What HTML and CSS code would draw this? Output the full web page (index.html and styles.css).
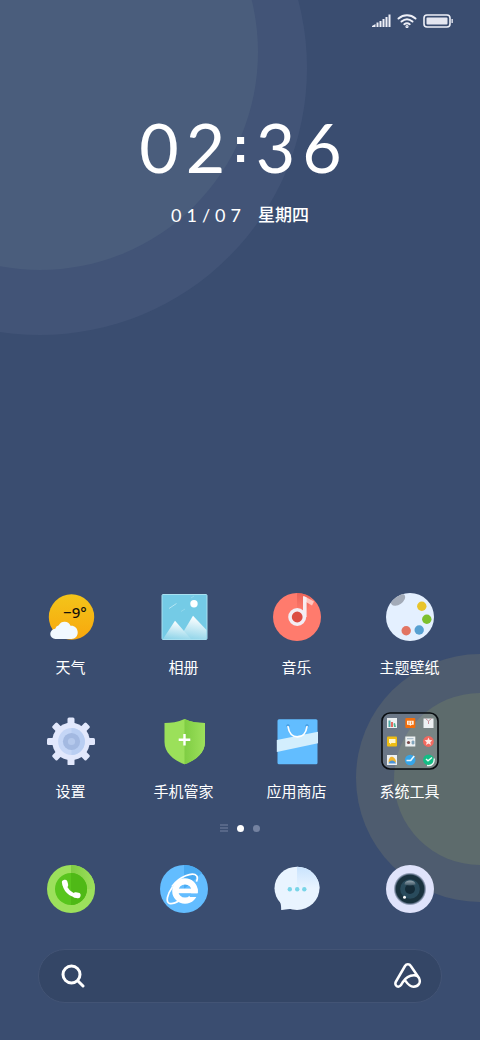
FILE: index.html
```html
<!DOCTYPE html>
<html lang="zh-CN">
<head>
  <meta charset="UTF-8" />
  <meta name="viewport" content="width=device-width, initial-scale=1.0"/>
  <title>桌面</title>
  <link rel="stylesheet" href="styles.css">
</head>
<body>

  <div class="home">
    <!-- Wallpaper -->
    <div class="wallpaper" aria-hidden="true">
      <span class="circle top-outer"></span>
      <span class="circle top-inner"></span>
      <span class="circle bottom-outer"></span>
      <span class="circle bottom-inner"></span>
    </div>

    <header class="status-bar">
      <svg width="19" height="14" viewBox="0 0 19 14" fill="#eef0f8">
        <path d="M0 13v-1l3.500-2v3zM4.500 8.500h2V13h-2zM7.500 7h2v6h-2zM10.500 5h2v8h-2zM13.500 3h2v10h-2zM16.500.5h2V13h-2z"/>
      </svg>
      <svg width="20" height="14" viewBox="0 0 20 14" fill="none" stroke="#eef0f8" stroke-width="2" stroke-linecap="round">
        <path d="M1.500 4.500c5-4.300 12-4.300 17 0M4.500 7.500c3.400-2.800 7.600-2.800 11 0M7.300 10.200c1.700-1.300 3.700-1.300 5.400 0"/>
        <circle cx="10" cy="12.500" r=".6"/>
      </svg>
      <svg width="31" height="14" viewBox="0 0 31 14">
        <rect x="1" y="1" width="26" height="12" rx="3" fill="none" stroke="#eef0f8" stroke-width="1.600"/>
        <rect x="3.500" y="3.500" width="21" height="7" rx="1" fill="#e4e6f0"/>
        <path d="M28.500 5h1.300v4h-1.300z" fill="#eef0f8"/>
      </svg>
    </header>

    <section class="clock">
      <time class="time"><span>02</span><span class="colon">:</span><span>36</span></time>
      <p class="date"><span class="day">01/07</span><span class="weekday">星期四</span></p>
    </section>

    <!-- Apps -->
    <main class="apps">
      <button class="app" type="button">
        <svg class="icon" viewBox="0 0 48 48">
          <defs>
            <linearGradient id="sun" x1="0" y1="0" x2="0" y2="1">
              <stop offset="0" stop-color="#f3c51a"/><stop offset="1" stop-color="#f8a70d"/>
            </linearGradient>
          </defs>
          <circle cx="24.500" cy="24" r="22.700" fill="url(#sun)"/>
          <text class="degree" x="16" y="25">−9°</text>
          <path d="M8.500 46a5 5 0 0 1-.3-10.200 5 5 0 0 1 3.600-3.500 6.500 6.500 0 0 1 11.700.4c3.500-.5 7 2 7.200 6.300.2 4-2.500 7-6.200 7z" fill="#f1f9ff"/>
        </svg>
        <span>天气</span>
      </button>

      <button class="app" type="button">
        <svg class="icon" viewBox="0 0 48 48">
          <defs>
            <linearGradient id="hill" x1=".4" y1="0" x2=".2" y2="1">
              <stop offset="0" stop-color="#fff"/><stop offset="1" stop-color="#8ed4e9"/>
            </linearGradient>
          </defs>
          <rect x="2" y="1.500" width="45" height="45" rx="1" fill="#74cbe6" stroke="#a8e0f0"/>
          <path d="M9 15.500l7.500-5" stroke="#b3e5f3" stroke-width="1"/>
          <path d="M21 18.500l4-2.500M31 5l3-2" stroke="#91d8ec" stroke-width="1"/>
          <circle cx="34" cy="10.700" r="3.700" fill="#fff"/>
          <path d="M19 46l14-23.300L46.500 37v9z" fill="url(#hill)"/>
          <path d="M3 46l12-18.300L31 46z" fill="url(#hill)"/>
        </svg>
        <span>相册</span>
      </button>

      <button class="app" type="button">
        <svg class="icon" viewBox="0 0 48 48">
          <defs>
            <linearGradient id="musicShade" x1="0" y1="0" x2="0" y2="1">
              <stop offset="0" stop-color="#e2594f"/><stop offset="1" stop-color="#ff7b6d"/>
            </linearGradient>
          </defs>
          <circle cx="24" cy="24" r="24" fill="#ff7b6d"/>
          <path d="M24 0q8 0 14 4.500L34 20H24z" fill="url(#musicShade)" opacity=".7"/>
          <path d="M31 3L41 8.500l-2 4-6-3.500z" fill="#ffc6bf"/>
          <path d="M30 3l3.600 1.500V24H30z" fill="#f7ecf0"/>
          <circle cx="24.200" cy="24" r="7.200" fill="#dc4d43" stroke="#f3edf4" stroke-width="3.600"/>
        </svg>
        <span>音乐</span>
      </button>

      <button class="app" type="button">
        <svg class="icon" viewBox="0 0 48 48">
          <defs><clipPath id="board"><circle cx="24" cy="24" r="24"/></clipPath></defs>
          <circle cx="24" cy="24" r="24" fill="#e4f0ff"/>
          <g clip-path="url(#board)">
            <ellipse cx="12" cy="6.700" rx="8" ry="5" transform="rotate(-35 12 6.700)" fill="#a3abb8"/>
          </g>
          <circle cx="35.800" cy="13.300" r="4.700" fill="#e8c42b"/>
          <circle cx="40.800" cy="26.300" r="4.700" fill="#7dc02d"/>
          <circle cx="33.200" cy="37" r="4.700" fill="#57a0d1"/>
          <circle cx="20.200" cy="37.700" r="4.700" fill="#e27563"/>
        </svg>
        <span>主题壁纸</span>
      </button>

      <button class="app" type="button">
        <svg class="icon" viewBox="0 0 48 48">
          <defs><rect id="tooth" x="20.500" y=".5" width="7" height="12" rx="1.500"/></defs>
          <g fill="#e2e8fc">
            <circle cx="24" cy="24.500" r="18.800"/>
            <use href="#tooth"/>
            <use href="#tooth" transform="rotate(45 24 24.500)"/>
            <use href="#tooth" transform="rotate(90 24 24.500)"/>
            <use href="#tooth" transform="rotate(135 24 24.500)"/>
            <use href="#tooth" transform="rotate(180 24 24.500)"/>
            <use href="#tooth" transform="rotate(225 24 24.500)"/>
            <use href="#tooth" transform="rotate(270 24 24.500)"/>
            <use href="#tooth" transform="rotate(315 24 24.500)"/>
          </g>
          <circle cx="24.500" cy="24.500" r="13.400" fill="#c5d6f6"/>
          <path d="M24.500 11.100a13.400 13.400 0 0 1 0 26.800z" fill="#b9cef2"/>
          <circle cx="24.500" cy="24.500" r="8.600" fill="#a3b9e1"/>
          <circle cx="24.500" cy="24.500" r="3.600" fill="#b5c9ec"/>
        </svg>
        <span>设置</span>
      </button>

      <button class="app" type="button">
        <svg class="icon" viewBox="0 0 48 48">
          <defs>
            <linearGradient id="guard" x1="0" y1="0" x2="1" y2="0">
              <stop offset="0" stop-color="#7fcd43"/><stop offset="1" stop-color="#9de05c"/>
            </linearGradient>
          </defs>
          <path d="M24.500 2C18 5 11 6 4.500 6v19c0 10.500 9 18.500 20 22.300C36 43.500 45 35.500 45 25V6C38 6 31 5 24.500 2z" fill="#9be05a"/>
          <path d="M24.500 2v45.300C36 43.500 45 35.500 45 25V6C38 6 31 5 24.500 2z" fill="url(#guard)"/>
          <path d="M24.500 17v11.500M18.700 22.700h11.600" stroke="#fff" stroke-width="2.400"/>
        </svg>
        <span>手机管家</span>
      </button>

      <button class="app" type="button">
        <svg class="icon" viewBox="0 0 48 48">
          <rect x="4.500" y="2.200" width="40" height="45" rx="1.500" fill="#62bdff"/>
          <circle cx="15" cy="8.800" r="1.600" fill="#3d96dd"/>
          <circle cx="34" cy="8.800" r="1.600" fill="#3d96dd"/>
          <path d="M3.800 23l41.200-8.300v11.600L3.800 35z" fill="#d3eefd"/>
          <path d="M15 9.500c1 7 4.500 10.300 9.500 10.300s8.500-3.300 9.500-10.300" fill="none" stroke="#fff" stroke-width="1.700" stroke-linecap="round"/>
        </svg>
        <span>应用商店</span>
      </button>

      <button class="app" type="button">
        <svg class="icon folder" viewBox="0 0 58 58">
          <rect x="1" y="1" width="56" height="56" rx="8" fill="#fff" fill-opacity=".17" stroke="#080c10" stroke-width="1.600"/>
          <g fill="#edf1f3">
            <rect x="6" y="6" width="10" height="10"/>
            <rect x="42.500" y="6.500" width="10" height="9.500"/>
            <rect x="24.300" y="24.500" width="10" height="10"/>
            <rect x="6" y="43" width="10" height="10"/>
          </g>
          <path d="M7.500 8.500h2V15h-2z" fill="#4aa9a7"/>
          <path d="M10 10h2v5h-2z" fill="#e66a63"/>
          <path d="M12.500 11.500l1.500-.5 1 4h-2z" fill="#49b393"/>
          <rect x="24.300" y="6" width="10" height="10" rx="1" fill="#f46f0b"/>
          <path d="M26 8.700h6.700v4H26zM28 12.500h3l-1.500 1.300z" fill="#fff0df"/>
          <path d="M28 9.500v2.500M30.500 9.500v2.500" stroke="#f46f0b" stroke-width=".7"/>
          <path d="M44.500 6.500l3 2.500 3-2.500M47.500 9v3" fill="none" stroke="#c9929a" stroke-width="1"/>
          <rect x="6" y="24.500" width="10" height="10" rx="1" fill="#efbd13"/>
          <path d="M8 27h6.500v4h-4L9 32.500V31H8z" fill="#fff5ce"/>
          <circle cx="27.500" cy="30.500" r="1.600" fill="#7b4b4b"/>
          <path d="M26 26.700h6.500M31 29h2v3h-2z" stroke="#8ba5b6" stroke-width=".8" fill="#78a7c4"/>
          <circle cx="47.400" cy="29.500" r="5.400" fill="#f2695f"/>
          <path d="M47.500 25.500l1.100 2.600 2.700.2-2 1.900.6 2.800-2.400-1.500-2.500 1.500.7-2.800-2.100-1.900 2.800-.2z" fill="#ffe8e4"/>
          <path d="M7.500 50.500c0-5 2.500-6.500 4.500-5.500s3 3 3 5.500z" fill="#f0b52f"/>
          <path d="M7.500 51.500c1-4 6-4 7.500 0z" fill="#4b93d9"/>
          <circle cx="29.200" cy="48" r="5.300" fill="#36a5e8"/>
          <path d="M25.500 48.500h4.200l3.500-4.500" fill="none" stroke="#e9f8ff" stroke-width="1.600"/>
          <circle cx="47.500" cy="47.800" r="5.400" fill="#13bd85"/>
          <path d="M45 47l2 1.800 4-3.300M46 53.500c5 .8 7.500-2.500 7.200-7" fill="none" stroke="#edfff8" stroke-width="1.300"/>
        </svg>
        <span>系统工具</span>
      </button>
    </main>

    <nav class="pages" aria-label="页面">
      <svg width="8" height="8" viewBox="0 0 8 8" stroke="#7482a0" stroke-width="1"><path d="M0 1h8M0 4h8M0 7h8"/></svg>
      <span class="dot active"></span>
      <span class="dot"></span>
    </nav>

    <!-- Dock -->
    <footer class="dock">
      <button class="app" type="button" aria-label="电话">
        <svg class="icon" viewBox="0 0 48 48">
          <circle cx="24" cy="24" r="24" fill="#9ce05c"/>
          <path d="M24 0a24 24 0 0 1 24 24H24z" fill="url(#guard)"/>
          <circle cx="24" cy="24" r="16" fill="#58c51d"/>
          <path d="M24 8a16 16 0 0 1 0 32z" fill="#4fb916"/>
          <path d="M17.500 18.300c0 6 6 12.300 12.500 12.300" fill="none" stroke="#fff" stroke-width="4"/>
          <rect x="15.200" y="14.800" width="5.600" height="7.600" rx="2.500" transform="rotate(-15 18 18.500)" fill="#fff"/>
          <rect x="26" y="27.500" width="7.600" height="5.600" rx="2.500" transform="rotate(10 30 30)" fill="#fff"/>
        </svg>
      </button>
      <button class="app" type="button" aria-label="浏览器">
        <svg class="icon" viewBox="0 0 48 48">
          <circle cx="24" cy="24" r="24" fill="#63bdff"/>
          <path d="M24 0a24 24 0 0 1 18 8L24 24z" fill="#4aabf2"/>
          <circle cx="25" cy="26" r="9.700" fill="none" stroke="#fff" stroke-width="6.200"/>
          <path d="M28 28.200h11V32h-9z" fill="#63bdff"/>
          <path d="M16 25.900h21.700" stroke="#fff" stroke-width="4.600"/>
          <path d="M12 21.500C19 11.500 33 6.500 36.800 11c1 1.400.6 3.500-.4 5.700M12.500 22C7 29.500 5.500 37 9.500 38.500c3 .8 6.500-.8 10-3" fill="none" stroke="#fff" stroke-width="1.700"/>
        </svg>
      </button>
      <button class="app" type="button" aria-label="短信">
        <svg class="icon" viewBox="0 0 48 48">
          <defs>
            <linearGradient id="bubble" x1="0" y1="0" x2="0" y2="1">
              <stop offset="0" stop-color="#c9e3fd"/><stop offset="1" stop-color="#e9f4ff"/>
            </linearGradient>
          </defs>
          <ellipse cx="24" cy="23.300" rx="22.500" ry="21.600" fill="#e9f4ff"/>
          <path d="M4 32c4 5 4.200 8 4.200 13 3 .3 6-1.500 11-.8l4-5z" fill="#e9f4ff"/>
          <path d="M24 1.700a22.500 21.600 0 0 1 22.500 21.600H24z" fill="url(#bubble)"/>
          <circle cx="16.800" cy="24.300" r="2.200" fill="#79d5e8"/>
          <circle cx="24.200" cy="24.300" r="2.200" fill="#79d5e8"/>
          <circle cx="31.300" cy="24.300" r="2.200" fill="#79d5e8"/>
        </svg>
      </button>
      <button class="app" type="button" aria-label="相机">
        <svg class="icon" viewBox="0 0 48 48">
          <defs>
            <radialGradient id="lens">
              <stop offset=".84" stop-color="#1a323e"/><stop offset=".9" stop-color="#62738a"/><stop offset="1" stop-color="#dfe3fb"/>
            </radialGradient>
            <linearGradient id="glare" x1="0" y1="0" x2="0" y2="1">
              <stop offset="0" stop-color="#98a8b2"/><stop offset="1" stop-color="#3c5563"/>
            </linearGradient>
          </defs>
          <circle cx="24" cy="24" r="24" fill="#dfe3fb"/>
          <circle cx="24" cy="24" r="16.500" fill="url(#lens)"/>
          <circle cx="24" cy="24" r="9.800" fill="#294b5c"/>
          <circle cx="24" cy="24" r="5" fill="#142b38"/>
          <path d="M18.500 19.500c0-5.500 11-5.500 11 0q-5.500 2-11 0z" fill="url(#glare)"/>
          <circle cx="18.500" cy="32.300" r="1.500" fill="#fff"/>
        </svg>
      </button>
    </footer>

    <form class="search" role="search">
      <button type="submit" aria-label="搜索">
        <svg width="24" height="24" viewBox="0 0 24 24" fill="none" stroke="#fff" stroke-width="3" stroke-linecap="round">
          <circle cx="10.500" cy="10.500" r="8.500"/>
          <path d="M17 17l5 5"/>
        </svg>
      </button>
      <input type="text" id="keyword" name="keyword" aria-label="搜索">
      <button type="button" aria-label="语音助手">
        <svg width="28" height="26" viewBox="0 0 28 26" fill="none" stroke="#fff" stroke-width="2.500" stroke-linecap="round" stroke-linejoin="round">
          <path d="M11 17.200C13 20 15 23.700 19.500 23.700c5 0 7.700-4.200 5.500-8.700L16.800 3c-1.400-2.200-4.400-2.200-5.800 0L2 18.500C.5 21 2 23.700 4.200 23.700c2.300 0 3-1.700 4.300-4.200C11 15.500 14.500 12.300 20 12.300c2.500 0 4 .7 5 2.700"/>
        </svg>
      </button>
    </form>
  </div>

</body>
</html>
```

FILE: styles.css
```css
* {
  box-sizing: border-box;
}

body {
  margin: 0;
  background: #3a4d70;
  color: #fff;
  font-family: Lato, "Noto Sans CJK SC", sans-serif;
}

button {
  padding: 0;
  border: none;
  background: none;
  color: inherit;
  font: inherit;
  cursor: pointer;
}

svg {
  display: block;
}

.home {
  position: relative;
  display: flex;
  flex-direction: column;
  min-height: 100vh;
  padding-bottom: 37px;
  overflow: hidden;
  isolation: isolate;
}

/* wallpaper circles */
.wallpaper {
  position: absolute;
  inset: 0;
  z-index: -1;
}

.circle {
  position: absolute;
  border-radius: 50%;
}

.top-outer {
  top: -199px;
  left: -227px;
  width: 534px;
  height: 534px;
  background: #425477;
}

.top-inner {
  top: -166px;
  left: -178px;
  width: 436px;
  height: 436px;
  background: #4a5d7c;
}

.bottom-outer {
  right: -124px;
  bottom: 138px;
  width: 248px;
  height: 248px;
  background: #4e5c6f;
}

.bottom-inner {
  right: -86px;
  bottom: 175px;
  width: 172px;
  height: 172px;
  background: #5d6b6c;
}

.status-bar {
  display: flex;
  justify-content: flex-end;
  gap: 6px;
  padding: 14px 26px 0;
}

.clock {
  margin-top: 83px;
  text-align: center;
}

.time {
  display: flex;
  justify-content: center;
  align-items: center;
  padding-left: 8px;
  font-size: 68px;
  line-height: 72px;
  letter-spacing: 7px;
}

.colon {
  padding-bottom: 4px;
  font-family: "Liberation Sans", sans-serif;
  font-size: 50px;
  font-weight: bold;
  line-height: 50px;
}

.date {
  display: flex;
  justify-content: center;
  align-items: center;
  gap: 12px;
  margin: 20px 0 0;
  font-size: 18px;
  line-height: 24px;
}

.day {
  letter-spacing: 5px;
}

.weekday {
  font-size: 17px;
  font-weight: 500;
}

.apps,
.dock {
  display: grid;
  grid-template-columns: repeat(4, 1fr);
  padding: 0 14px;
}

.apps {
  row-gap: 40px;
  margin-top: auto;
}

.app {
  display: flex;
  flex-direction: column;
  align-items: center;
  gap: 16px;
  font-size: 15px;
  line-height: 20px;
}

.icon {
  width: 48px;
  height: 48px;
}

.folder {
  width: 58px;
  height: 58px;
  margin: -5px;
}

.degree {
  font-family: "Noto Sans", sans-serif;
  font-size: 15px;
  font-weight: 500;
  fill: #15120a;
}

.pages {
  display: flex;
  justify-content: center;
  align-items: center;
  gap: 9px;
  height: 10px;
  margin: 22px 0 32px;
}

.dot {
  width: 7px;
  height: 7px;
  border-radius: 50%;
  background: #7482a0;
}

.dot.active {
  background: #fff;
}

.search {
  display: flex;
  align-items: center;
  height: 54px;
  margin: 36px 38px 0;
  padding: 0 19px 0 22px;
  border: 1px solid #435475;
  border-radius: 27px;
  background: #344666;
}

.search input {
  flex: 1;
  min-width: 0;
  margin: 0 12px;
  border: none;
  outline: none;
  background: transparent;
  color: #fff;
  font: inherit;
}
```
